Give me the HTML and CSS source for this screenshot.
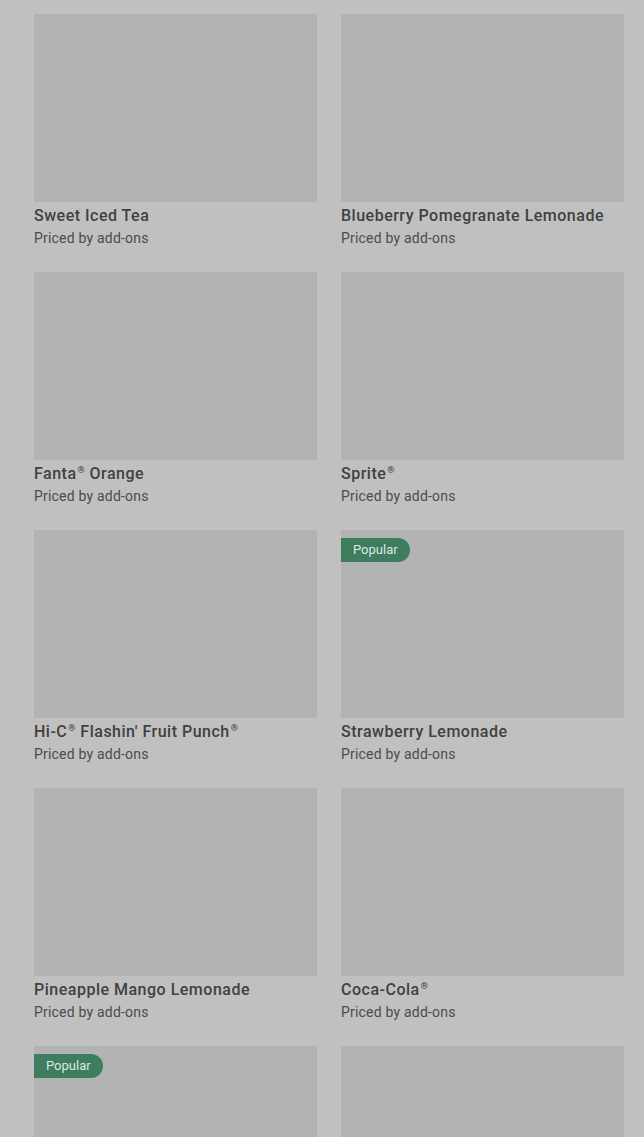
FILE: index.html
```html
<!DOCTYPE html>
<html>

<head>
  <meta charset="UTF-8" />
  <title>Drinks</title>
  <link rel="stylesheet" href="styles.css">
</head>

<body>
  <div class="menu-grid">
    <div class="item">
      <div class="item-image"></div>
      <p class="item-name">Sweet Iced Tea</p>
      <p class="item-price">Priced by add-ons</p>
    </div>
    <div class="item">
      <div class="item-image"></div>
      <p class="item-name">Blueberry Pomegranate Lemonade</p>
      <p class="item-price">Priced by add-ons</p>
    </div>
    <div class="item">
      <div class="item-image"></div>
      <p class="item-name">Fanta<sup>®</sup> Orange</p>
      <p class="item-price">Priced by add-ons</p>
    </div>
    <div class="item">
      <div class="item-image"></div>
      <p class="item-name">Sprite<sup>®</sup></p>
      <p class="item-price">Priced by add-ons</p>
    </div>
    <div class="item">
      <div class="item-image"></div>
      <p class="item-name">Hi-C<sup>®</sup> Flashin' Fruit Punch<sup>®</sup></p>
      <p class="item-price">Priced by add-ons</p>
    </div>
    <div class="item">
      <div class="item-image"><span class="badge">Popular</span></div>
      <p class="item-name">Strawberry Lemonade</p>
      <p class="item-price">Priced by add-ons</p>
    </div>
    <div class="item">
      <div class="item-image"></div>
      <p class="item-name">Pineapple Mango Lemonade</p>
      <p class="item-price">Priced by add-ons</p>
    </div>
    <div class="item">
      <div class="item-image"></div>
      <p class="item-name">Coca-Cola<sup>®</sup></p>
      <p class="item-price">Priced by add-ons</p>
    </div>
    <div class="item">
      <div class="item-image"><span class="badge">Popular</span></div>
    </div>
    <div class="item">
      <div class="item-image"></div>
    </div>
  </div>
</body>

</html>
```

FILE: styles.css
```css
/* Reset */
* {
  margin: 0;
  padding: 0;
  box-sizing: border-box;
}

body {
  height: 100vh;
  overflow: hidden;
  background-color: #c0c0c0;
  font-family: Roboto, "Liberation Sans", sans-serif;
}

/* Two column menu */
.menu-grid {
  display: grid;
  grid-template-columns: 283px 283px;
  column-gap: 24px;
  row-gap: 23px;
  padding: 14px 20px 0 34px;
}

.item-image {
  position: relative;
  height: 188px;
  background-color: #b3b3b3;
}

.item-name {
  margin-top: 3px;
  font-size: 16px;
  line-height: 22px;
  font-weight: 500;
  letter-spacing: 0.5px;
  color: #414141;
}

.item-name sup {
  font-size: 9px;
  line-height: 0;
  vertical-align: 6px;
  margin-left: 1px;
}

.item-price {
  font-size: 14px;
  line-height: 22px;
  letter-spacing: 0.2px;
  color: #4c4c4c;
}

/* Popular tag sits over the image */
.badge {
  position: absolute;
  top: 8px;
  left: 0;
  height: 24px;
  padding: 0 12px;
  line-height: 24px;
  font-size: 13px;
  color: #dbe8e1;
  background-color: #3e7d5e;
  border-radius: 0 12px 12px 0;
}
```
